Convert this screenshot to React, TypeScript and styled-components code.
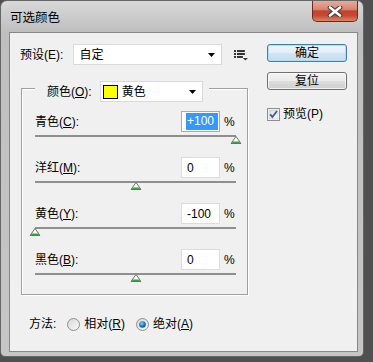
import React from "react";
import styled, { createGlobalStyle } from "styled-components";

const GlobalStyle = createGlobalStyle`
  html, body { margin: 0; padding: 0; }
  body {
    width: 373px;
    height: 362px;
    overflow: hidden;
    background: #505050;
    font-family: "Liberation Sans", "Noto Sans CJK SC", sans-serif;
    font-size: 12px;
    line-height: 16px;
    color: #000;
  }
`;

const Window = styled.div`
  box-sizing: border-box;
  width: 364px;
  height: 357px;
  border: 1px solid #666;
  border-radius: 7px 7px 5px 5px;
  padding: 0 5px 4px 8px;
  background: linear-gradient(#d8d8d8, #bfbfbf 31px, #c6c6c6);
  display: flex;
  flex-direction: column;
`;

const TitleBar = styled.div`
  height: 31px;
  display: flex;
  align-items: flex-start;
`;

const Title = styled.div`
  margin: 10px 0 0 1px;
  line-height: 14px;
  font-size: 12.5px;
`;

const CloseButton = styled.div`
  margin-left: auto;
  box-sizing: border-box;
  width: 46px;
  height: 21px;
  border: 1px solid #6c2b22;
  border-top: none;
  border-radius: 0 0 5px 5px;
  background: linear-gradient(#e6ab9c 0%, #d88670 42%, #c3432c 50%, #c44a31 72%, #dc8563 100%);
  display: flex;
  align-items: center;
  justify-content: center;
`;

const Client = styled.div`
  flex: 1;
  border: 1px solid #878787;
  background: #f0f0f0;
  display: flex;
  flex-direction: column;
  padding: 11px 0 0 10px;
`;

const MainRow = styled.div`
  display: flex;
  align-items: flex-start;
`;

const LeftCol = styled.div`
  width: 228px;
  display: flex;
  flex-direction: column;
`;

const PresetRow = styled.div`
  display: flex;
  align-items: center;
  height: 21px;
`;

const PresetLabel = styled.span`
  width: 54px;
`;

const Select = styled.div<{ $width: number; $padLeft: number }>`
  box-sizing: border-box;
  width: ${(p) => p.$width}px;
  height: 21px;
  border: 1px solid #d9d9d9;
  background: #fff;
  display: flex;
  align-items: center;
  padding: 0 6px 0 ${(p) => p.$padLeft}px;
`;

const SelectText = styled.span`
  flex: 1;
`;

const Swatch = styled.span`
  box-sizing: border-box;
  width: 15px;
  height: 14px;
  border: 1px solid #000;
  background: #ffff00;
  margin-right: 4px;
`;

const MenuIcon = styled.svg`
  margin-left: 12px;
`;

const Group = styled.fieldset`
  box-sizing: border-box;
  width: 227px;
  margin: 9px 0 0 1px;
  min-width: 0;
  padding: 9px 11px 19px 13px;
  border: 1px solid #a0a0a0;
  box-shadow: inset 1px 1px 0 #fff, 1px 1px 0 #fff;
`;

const Legend = styled.legend`
  padding: 7px 6px 0 12px;
  display: flex;
  align-items: center;
  background: #f0f0f0;
`;

const LegendLabel = styled.span`
  margin-right: 8px;
`;

const Key = styled.span`
  text-decoration: underline;
`;

const SliderRow = styled.div`
  display: flex;
  flex-direction: column;
  margin-bottom: 20px;
  &:last-child { margin-bottom: 0; }
`;

const RowTop = styled.div`
  display: flex;
  align-items: center;
  height: 21px;
`;

const RowLabel = styled.span`
  flex: 1;
`;

const NumberBox = styled.div<{ $focused?: boolean }>`
  box-sizing: border-box;
  width: 39px;
  height: 21px;
  border: 1px solid ${(p) => (p.$focused ? "#7eb4ea" : "#dcdcdc")};
  background: #fff;
  display: flex;
  align-items: center;
  padding: 0 1px 0 ${(p) => (p.$focused ? 4 : 5)}px;
`;

const Selected = styled.span`
  flex: 1;
  align-self: stretch;
  margin: 1px 0;
  padding-left: 1px;
  background: #3399ff;
  color: #fff;
  line-height: 17px;
`;

const Percent = styled.span`
  box-sizing: border-box;
  width: 16px;
  padding-left: 4px;
`;

const Track = styled.div`
  position: relative;
  height: 2px;
  margin-top: 3px;
  background: #8f8f8f;
`;

const Thumb = styled.div`
  position: absolute;
  top: 1px;
  height: 8px;
  transform: translateX(-50%);
  display: flex;
`;

const RightCol = styled.div`
  margin-left: 19px;
  width: 80px;
  display: flex;
  flex-direction: column;
`;

const Button = styled.div<{ $default?: boolean }>`
  box-sizing: border-box;
  width: 80px;
  height: 18px;
  border: 1px solid ${(p) => (p.$default ? "#3c7fb1" : "#707070")};
  border-radius: 3px;
  background: ${(p) =>
    p.$default
      ? "linear-gradient(#edf5fb 0%, #e2eef7 50%, #d2e5f3 50%, #c6ddef 100%)"
      : "linear-gradient(#f2f2f2 0%, #ebebeb 50%, #dddddd 50%, #cfcfcf 100%)"};
  box-shadow: inset 0 0 0 1px ${(p) => (p.$default ? "rgba(160,220,250,.8)" : "rgba(255,255,255,.7)")};
  display: flex;
  align-items: center;
  justify-content: center;
  & + & { margin-top: 10px; }
`;

const CheckRow = styled.div`
  margin-top: 16px;
  display: flex;
  align-items: center;
  gap: 3px;
`;

const MethodRow = styled.div`
  margin: 21px 0 0 9px;
  display: flex;
  align-items: center;
  height: 16px;
`;

const RadioItem = styled.span`
  display: flex;
  align-items: center;
  margin-left: 11px;
  gap: 4px;
`;

const Arrow = () => (
  <svg width="7" height="4" viewBox="0 0 7 4">
    <polygon points="0,0 7,0 3.5,4" fill="#000" />
  </svg>
);

const CloseGlyph = () => (
  <svg width="16" height="11" viewBox="0 0 16 11">
    <path d="M3 1.5 L13 9.5 M13 1.5 L3 9.5" stroke="#3a3a3a" strokeWidth="4.6" strokeLinecap="round" />
    <path d="M3 1.5 L13 9.5 M13 1.5 L3 9.5" stroke="#fff" strokeWidth="2.6" strokeLinecap="round" />
  </svg>
);

const ThumbGlyph = () => (
  <svg width="11" height="8" viewBox="0 0 11 8">
    <polygon points="5.5,0.5 10.5,7.5 0.5,7.5" fill="#fff" stroke="#6d6d6d" strokeWidth="1" strokeLinejoin="round" />
    <polygon points="2.2,5.5 8.8,5.5 9.6,7 1.4,7" fill="#2fa53d" />
  </svg>
);

const Checkbox = () => (
  <svg width="13" height="13" viewBox="0 0 13 13">
    <defs>
      <linearGradient id="cb" x1="0" y1="0" x2="1" y2="1">
        <stop offset="0" stopColor="#dcdcdc" />
        <stop offset="1" stopColor="#fff" />
      </linearGradient>
    </defs>
    <rect x="0.5" y="0.5" width="12" height="12" fill="#fff" stroke="#8e8f8f" />
    <rect x="2" y="2" width="9" height="9" fill="url(#cb)" stroke="#c2c2c2" strokeWidth="0.6" />
    <path d="M3.2 6.4 L5.4 9 L10 3" fill="none" stroke="#3a5aa0" strokeWidth="1.8" />
  </svg>
);

const Radio = ({ checked }: { checked?: boolean }) => (
  <svg width="13" height="13" viewBox="0 0 13 13">
    <defs>
      <linearGradient id="rg" x1="0" y1="0" x2="1" y2="1">
        <stop offset="0" stopColor="#d6d6d6" />
        <stop offset="1" stopColor="#fbfbfb" />
      </linearGradient>
      <radialGradient id="rb" cx="0.4" cy="0.35" r="0.7">
        <stop offset="0" stopColor="#8fd3ff" />
        <stop offset="0.55" stopColor="#1e7bc6" />
        <stop offset="1" stopColor="#0c4a86" />
      </radialGradient>
    </defs>
    <circle cx="6.5" cy="6.5" r="6" fill="url(#rg)" stroke="#8e8f8f" />
    {checked && <circle cx="6.5" cy="6.5" r="3.3" fill="url(#rb)" />}
  </svg>
);

const sliders = [
  { name: "青色", key: "C", value: 100, focused: true },
  { name: "洋红", key: "M", value: 0 },
  { name: "黄色", key: "Y", value: -100 },
  { name: "黑色", key: "B", value: 0 },
];

const fmt = (v: number) => (v > 0 ? `+${v}` : `${v}`);

export default function App() {
  return (
    <>
      <GlobalStyle />
      <Window>
        <TitleBar>
          <Title>可选颜色</Title>
          <CloseButton>
            <CloseGlyph />
          </CloseButton>
        </TitleBar>
        <Client>
          <MainRow>
            <LeftCol>
              <PresetRow>
                <PresetLabel>预设(E):</PresetLabel>
                <Select $width={150} $padLeft={5}>
                  <SelectText>自定</SelectText>
                  <Arrow />
                </Select>
                <MenuIcon width="14" height="12" viewBox="0 0 14 12">
                  <rect x="0" y="1" width="2" height="2" fill="#333" />
                  <rect x="3" y="1" width="8" height="2" fill="#333" />
                  <rect x="0" y="4" width="2" height="2" fill="#333" />
                  <rect x="3" y="4" width="8" height="2" fill="#333" />
                  <rect x="0" y="7" width="2" height="2" fill="#333" />
                  <rect x="3" y="7" width="6" height="2" fill="#333" />
                  <polygon points="9,9 14,9 11.5,11.5" fill="#333" />
                </MenuIcon>
              </PresetRow>
              <Group>
                <Legend>
                  <LegendLabel>
                    颜色(<Key>O</Key>):
                  </LegendLabel>
                  <Select $width={103} $padLeft={2}>
                    <Swatch />
                    <SelectText>黄色</SelectText>
                    <Arrow />
                  </Select>
                </Legend>
                {sliders.map((s) => (
                  <SliderRow key={s.key}>
                    <RowTop>
                      <RowLabel>
                        {s.name}(<Key>{s.key}</Key>):
                      </RowLabel>
                      <NumberBox $focused={s.focused}>
                        {s.focused ? <Selected>{fmt(s.value)}</Selected> : fmt(s.value)}
                      </NumberBox>
                      <Percent>%</Percent>
                    </RowTop>
                    <Track>
                      <Thumb style={{ left: `${(s.value + 100) / 2}%` }}>
                        <ThumbGlyph />
                      </Thumb>
                    </Track>
                  </SliderRow>
                ))}
              </Group>
            </LeftCol>
            <RightCol>
              <Button $default>确定</Button>
              <Button>复位</Button>
              <CheckRow>
                <Checkbox />
                <span>预览(P)</span>
              </CheckRow>
            </RightCol>
          </MainRow>
          <MethodRow>
            <span>方法:</span>
            <RadioItem>
              <Radio />
              <span>
                相对(<Key>R</Key>)
              </span>
            </RadioItem>
            <RadioItem>
              <Radio checked />
              <span>
                绝对(<Key>A</Key>)
              </span>
            </RadioItem>
          </MethodRow>
        </Client>
      </Window>
    </>
  );
}
